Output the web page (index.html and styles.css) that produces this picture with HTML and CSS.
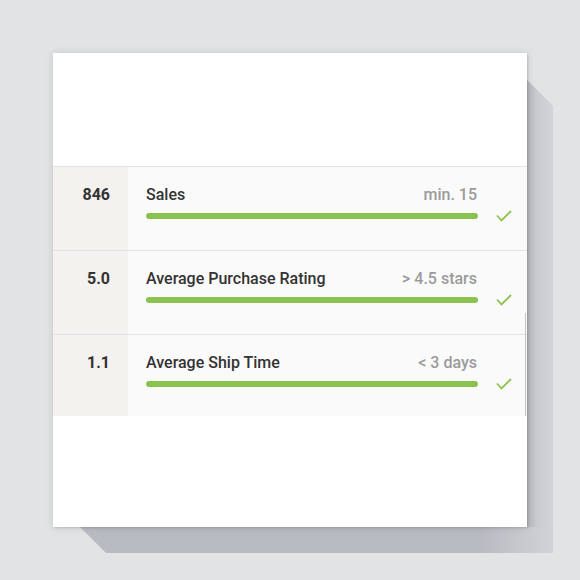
FILE: index.html
```html
<!DOCTYPE html>
<html>
<head>
<meta charset="utf-8">
<link rel="stylesheet" href="styles.css">
</head>
<body>
<div class="stage">
  <div class="card">
    <div class="card-top"></div>
    <div class="rows">
      <div class="row">
        <div class="value">846</div>
        <div class="metric">
          <div class="info">
            <div class="head"><span class="label">Sales</span><span class="crit">min. 15</span></div>
            <div class="bar"></div>
          </div>
          <div class="check"><svg width="16" height="12" viewBox="0 0 16 12"><path d="M1 5.5 L5.5 10.5 L15 1" fill="none" stroke="#8cc152" stroke-width="1.8"/></svg></div>
        </div>
      </div>
      <div class="row">
        <div class="value">5.0</div>
        <div class="metric">
          <div class="info">
            <div class="head"><span class="label">Average Purchase Rating</span><span class="crit">&gt; 4.5 stars</span></div>
            <div class="bar"></div>
          </div>
          <div class="check"><svg width="16" height="12" viewBox="0 0 16 12"><path d="M1 5.5 L5.5 10.5 L15 1" fill="none" stroke="#8cc152" stroke-width="1.8"/></svg></div>
        </div>
      </div>
      <div class="row last">
        <div class="value">1.1</div>
        <div class="metric">
          <div class="info">
            <div class="head"><span class="label">Average Ship Time</span><span class="crit">&lt; 3 days</span></div>
            <div class="bar"></div>
          </div>
          <div class="check"><svg width="16" height="12" viewBox="0 0 16 12"><path d="M1 5.5 L5.5 10.5 L15 1" fill="none" stroke="#8cc152" stroke-width="1.8"/></svg></div>
        </div>
      </div>
      <div class="scroll-thumb"></div>
    </div>
  </div>
</div>
</body>
</html>
```
FILE: styles.css
```css
html, body {
  margin: 0;
  padding: 0;
  background: #e2e3e5;
}
.stage {
  width: 580px;
  height: 580px;
  padding: 53px;
  box-sizing: border-box;
  position: relative;
  font-family: "Roboto", "Lato", sans-serif;
}
.stage::before {
  content: "";
  position: absolute;
  left: 80px;
  top: 80px;
  width: 473px;
  height: 473px;
  background: linear-gradient(90deg, #b9bbc2 0%, #b9bbc2 85%, #d2d3d7 100%);
  clip-path: polygon(447px 0, 473px 26px, 473px 473px, 26px 473px, 0 447px);
}
.stage::after {
  content: "";
  position: absolute;
  left: 527px;
  top: 80px;
  width: 26px;
  height: 447px;
  background: linear-gradient(90deg, #b4b6bc 0%, #cacbd0 40%, #d3d4d8 100%);
  clip-path: polygon(0 0, 26px 26px, 26px 447px, 0 447px);
}
.card {
  position: relative;
  z-index: 1;
  width: 474px;
  height: 474px;
  background: #fff;
  box-shadow: 0 0 8px rgba(0,0,0,0.12), 1px 1px 2px rgba(0,0,0,0.12);
  display: flex;
  flex-direction: column;
}
.card-top {
  height: 113px;
}
.rows {
  position: relative;
  border-top: 1px solid #e3e3e3;
}
.row {
  display: grid;
  grid-template-columns: 75px 1fr;
  height: 83px;
  border-bottom: 1px solid #e3e3e3;
}
.row.last {
  height: 81px;
  border-bottom: none;
}
.value {
  background: #f4f2ee;
  text-align: right;
  padding-right: 18px;
  padding-top: 18px;
  font-size: 16px;
  font-weight: 700;
  color: #333;
  line-height: 20px;
}
.metric {
  background: #fafafa;
  display: grid;
  grid-template-columns: 1fr 49px;
  padding-left: 18px;
}
.info {
  padding-top: 18px;
}
.head {
  display: flex;
  justify-content: space-between;
  line-height: 20px;
}
.label {
  font-size: 16px;
  font-weight: 500;
  color: #333;
}
.crit {
  font-size: 16px;
  font-weight: 500;
  color: #9b9b9b;
  padding-right: 1px;
}
.bar {
  margin-top: 8px;
  height: 6px;
  border-radius: 3px;
  background: #8bc34f;
}
.check {
  display: flex;
  justify-content: center;
  padding-top: 43px;
  padding-left: 2px;
}
.check svg {
  display: block;
}
.scroll-thumb {
  position: absolute;
  right: 1px;
  bottom: 0;
  width: 1px;
  height: 103px;
  background: #c4c4c4;
}
```
